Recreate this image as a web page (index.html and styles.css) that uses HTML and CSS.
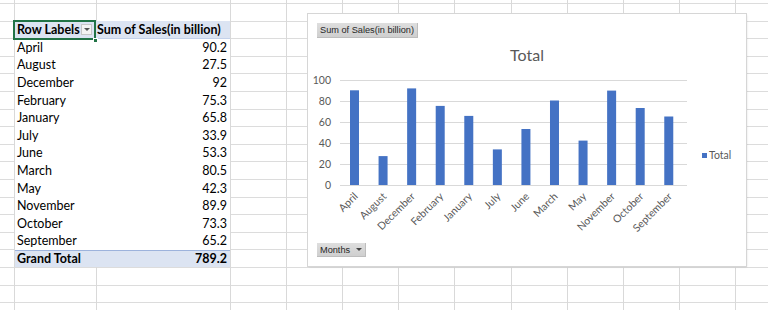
FILE: index.html
```html
<!DOCTYPE html>
<html lang="en">
<head>
  <meta charset="UTF-8">
  <title>Sales pivot</title>
  <link rel="stylesheet" href="styles.css">
</head>
<body>

  <div class="sheet">

    <!-- Pivot table -->
    <div class="pivot">
      <div class="prow head">
        <div class="cell label sel">Row Labels <span class="dd"></span><span class="handle"></span></div>
        <div class="cell hval">Sum of Sales(in billion)</div>
      </div>
      <div class="prow"><div class="cell label">April</div><div class="cell num">90.2</div></div>
      <div class="prow"><div class="cell label">August</div><div class="cell num">27.5</div></div>
      <div class="prow"><div class="cell label">December</div><div class="cell num">92</div></div>
      <div class="prow"><div class="cell label">February</div><div class="cell num">75.3</div></div>
      <div class="prow"><div class="cell label">January</div><div class="cell num">65.8</div></div>
      <div class="prow"><div class="cell label">July</div><div class="cell num">33.9</div></div>
      <div class="prow"><div class="cell label">June</div><div class="cell num">53.3</div></div>
      <div class="prow"><div class="cell label">March</div><div class="cell num">80.5</div></div>
      <div class="prow"><div class="cell label">May</div><div class="cell num">42.3</div></div>
      <div class="prow"><div class="cell label">November</div><div class="cell num">89.9</div></div>
      <div class="prow"><div class="cell label">October</div><div class="cell num">73.3</div></div>
      <div class="prow"><div class="cell label">September</div><div class="cell num">65.2</div></div>
      <div class="prow total"><div class="cell label">Grand Total</div><div class="cell num">789.2</div></div>
    </div>

    <!-- Pivot chart -->
    <div class="chart">
      <svg class="plot" width="438" height="252" viewBox="0 0 438 252">
        <text class="title" x="219" y="47">Total</text>

        <g class="grid">
          <line x1="32" x2="379" y1="66.5" y2="66.5"/>
          <line x1="32" x2="379" y1="87.5" y2="87.5"/>
          <line x1="32" x2="379" y1="108.5" y2="108.5"/>
          <line x1="32" x2="379" y1="129.5" y2="129.5"/>
          <line x1="32" x2="379" y1="150.5" y2="150.5"/>
          <line x1="32" x2="379" y1="171.5" y2="171.5"/>
        </g>

        <g class="ylab">
          <text x="23" y="70">100</text>
          <text x="23" y="91">80</text>
          <text x="23" y="112">60</text>
          <text x="23" y="133">40</text>
          <text x="23" y="154">20</text>
          <text x="23" y="175">0</text>
        </g>

        <g class="bars">
          <rect x="42" y="76.3" width="9" height="94.7"/>
          <rect x="70.57" y="142.1" width="9" height="28.9"/>
          <rect x="99.14" y="74.4" width="9" height="96.6"/>
          <rect x="127.71" y="91.9" width="9" height="79.1"/>
          <rect x="156.28" y="101.9" width="9" height="69.1"/>
          <rect x="184.85" y="135.4" width="9" height="35.6"/>
          <rect x="213.42" y="115" width="9" height="56"/>
          <rect x="241.99" y="86.5" width="9" height="84.5"/>
          <rect x="270.56" y="126.6" width="9" height="44.4"/>
          <rect x="299.13" y="76.6" width="9" height="94.4"/>
          <rect x="327.7" y="94" width="9" height="77"/>
          <rect x="356.27" y="102.5" width="9" height="68.5"/>
        </g>

        <g class="xlab">
          <text transform="translate(50.5 183) rotate(-45)">April</text>
          <text transform="translate(79.07 183) rotate(-45)">August</text>
          <text transform="translate(107.64 183) rotate(-45)">December</text>
          <text transform="translate(136.21 183) rotate(-45)">February</text>
          <text transform="translate(164.78 183) rotate(-45)">January</text>
          <text transform="translate(193.35 183) rotate(-45)">July</text>
          <text transform="translate(221.92 183) rotate(-45)">June</text>
          <text transform="translate(250.49 183) rotate(-45)">March</text>
          <text transform="translate(279.06 183) rotate(-45)">May</text>
          <text transform="translate(307.63 183) rotate(-45)">November</text>
          <text transform="translate(336.2 183) rotate(-45)">October</text>
          <text transform="translate(364.77 183) rotate(-45)">September</text>
        </g>

        <rect class="key" x="394" y="139" width="5" height="5"/>
        <text class="legend" x="401" y="145">Total</text>
      </svg>

      <div class="field">Sum of Sales(in billion)</div>
      <div class="field months">Months <span class="caret"></span></div>
    </div>

  </div>

</body>
</html>
```

FILE: styles.css
```css
* {
  margin: 0;
  padding: 0;
  box-sizing: border-box;
}

body {
  background: #fff;
  font-family: Lato, "Liberation Sans", sans-serif;
  color: #000;
}

/* worksheet with its cell grid */
.sheet {
  position: relative;
  width: 768px;
  height: 310px;
  overflow: hidden;
  padding-top: 21px;
  background:
    linear-gradient(#d9d9d9, #d9d9d9) 14px 0 / 1px 100% no-repeat,
    linear-gradient(#d9d9d9, #d9d9d9) 96px 0 / 1px 100% no-repeat,
    linear-gradient(#d9d9d9, #d9d9d9) 230px 0 / 1px 100% no-repeat,
    linear-gradient(#d9d9d9, #d9d9d9) 286px 0 / 1px 100% no-repeat,
    linear-gradient(#d9d9d9, #d9d9d9) 342px 0 / 1px 100% no-repeat,
    linear-gradient(#d9d9d9, #d9d9d9) 398px 0 / 1px 100% no-repeat,
    linear-gradient(#d9d9d9, #d9d9d9) 454px 0 / 1px 100% no-repeat,
    linear-gradient(#d9d9d9, #d9d9d9) 511px 0 / 1px 100% no-repeat,
    linear-gradient(#d9d9d9, #d9d9d9) 567px 0 / 1px 100% no-repeat,
    linear-gradient(#d9d9d9, #d9d9d9) 623px 0 / 1px 100% no-repeat,
    linear-gradient(#d9d9d9, #d9d9d9) 679px 0 / 1px 100% no-repeat,
    linear-gradient(#d9d9d9, #d9d9d9) 735px 0 / 1px 100% no-repeat,
    linear-gradient(to bottom,
      #dcdcdc 0 1px, transparent 1px 18px,
      #dcdcdc 18px 19px, transparent 19px 35px,
      #dcdcdc 35px 36px, transparent 36px 53px,
      #dcdcdc 53px 54px, transparent 54px 70px,
      #dcdcdc 70px 71px, transparent 71px) 0 3px / 100% 88px repeat-y,
    #fff;
}

/* pivot table */
.pivot {
  width: 215px;
  margin-left: 15px;
  background: #fff;
  font-size: 12.5px;
}

.prow {
  display: grid;
  grid-template-columns: 81px 134px;
  height: 17.6px;
  align-items: center;
}

.cell {
  height: 100%;
  display: flex;
  align-items: center;
  white-space: nowrap;
}

.label {
  padding-left: 2px;
}

.num {
  justify-content: flex-end;
  padding-right: 3px;
}

.head,
.total {
  background: #dce4f2;
  font-weight: bold;
}

.head {
  box-shadow: inset 0 -1px #c3d1ea;
}

.total {
  box-shadow: inset 0 1px #9db3dc;
}

.hval {
  padding-left: 1px;
}

/* selected cell */
.sel {
  position: relative;
  justify-content: space-between;
}

.sel::after {
  content: "";
  position: absolute;
  top: -1px;
  left: -2px;
  right: 0;
  bottom: -1px;
  border: 2px solid #217346;
}

.handle {
  position: absolute;
  right: -2px;
  bottom: -4px;
  width: 5px;
  height: 5px;
  background: #217346;
  border: 1px solid #fff;
  z-index: 2;
}

.dd {
  width: 11px;
  height: 11px;
  margin-right: 4px;
  border: 1px solid #c6c6c6;
  background: #f3f3f3;
  display: flex;
  align-items: center;
  justify-content: center;
}

.dd::before {
  content: "";
  border-left: 3px solid transparent;
  border-right: 3px solid transparent;
  border-top: 3px solid #555;
}

/* chart object floats over the cells */
.chart {
  position: absolute;
  left: 308px;
  top: 14px;
  width: 438px;
  height: 252px;
  background: #fff;
  box-shadow: 0 0 0 1px #d6d6d6, 1px 1px 2px rgba(0, 0, 0, 0.12);
  display: flex;
  flex-direction: column;
  justify-content: space-between;
  align-items: flex-start;
  padding: 9px;
}

.plot {
  position: absolute;
  left: 0;
  top: 0;
}

.plot text {
  font-family: Lato, "Liberation Sans", sans-serif;
  fill: #595959;
}

.title {
  font-size: 16px;
  text-anchor: middle;
}

.grid line {
  stroke: #d9d9d9;
  stroke-width: 1;
}

.ylab text {
  font-size: 10.5px;
  text-anchor: end;
}

.bars rect,
.key {
  fill: #4472c4;
}

.xlab text {
  font-size: 10.5px;
  text-anchor: end;
}

.legend {
  font-size: 10.5px;
}

.field {
  position: relative;
  height: 15px;
  padding: 0 3px;
  background: linear-gradient(#dedede, #cfcfcf);
  border-right: 1px solid #bdbdbd;
  border-bottom: 1px solid #bdbdbd;
  font-family: "Liberation Sans", sans-serif;
  font-size: 9.2px;
  color: #262626;
  display: flex;
  align-items: center;
  white-space: nowrap;
}

.months {
  height: 14px;
  width: 49px;
  gap: 6px;
}

.caret {
  border-left: 3px solid transparent;
  border-right: 3px solid transparent;
  border-top: 3px solid #444;
}
```
